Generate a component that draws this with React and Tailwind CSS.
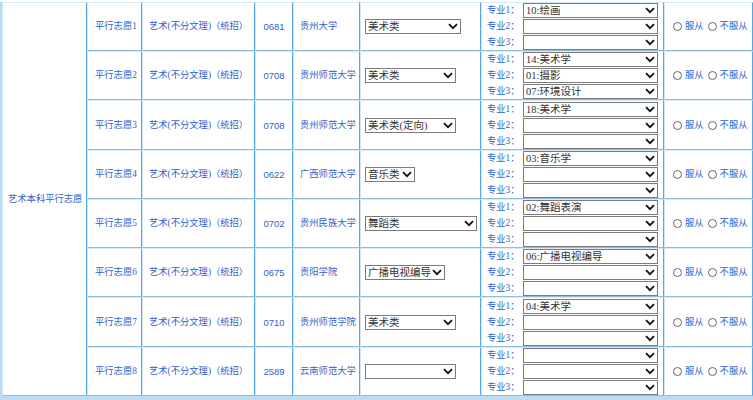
import React from 'react';

const rows = [
  { name: '平行志愿1', code: '0681', school: '贵州大学', cat: '美术类', catW: 'w-[96px]', majors: ['10:绘画', '', ''], h: 'h-[49px]' },
  { name: '平行志愿2', code: '0708', school: '贵州师范大学', cat: '美术类', catW: 'w-[91px]', majors: ['14:美术学', '01:摄影', '07:环境设计'], h: 'h-[49px]' },
  { name: '平行志愿3', code: '0708', school: '贵州师范大学', cat: '美术类(定向)', catW: 'w-[91px]', majors: ['18:美术学', '', ''], h: 'h-[50px]' },
  { name: '平行志愿4', code: '0622', school: '广西师范大学', cat: '音乐类', catW: 'w-[50px]', majors: ['03:音乐学', '', ''], h: 'h-[49px]' },
  { name: '平行志愿5', code: '0702', school: '贵州民族大学', cat: '舞蹈类', catW: 'w-[112px]', majors: ['02:舞蹈表演', '', ''], h: 'h-[49px]' },
  { name: '平行志愿6', code: '0675', school: '贵阳学院', cat: '广播电视编导', catW: 'w-[80px]', majors: ['06:广播电视编导', '', ''], h: 'h-[49px]' },
  { name: '平行志愿7', code: '0710', school: '贵州师范学院', cat: '美术类', catW: 'w-[91px]', majors: ['04:美术学', '', ''], h: 'h-[50px]' },
  { name: '平行志愿8', code: '2589', school: '云南师范大学', cat: '', catW: 'w-[91px]', majors: ['', '', ''], h: 'h-[49px]' },
];

const cell = 'border-l border-l-[#cfe6f8] border-r border-r-[#55a8e8] border-b border-b-[#8fbde0] border-t border-t-[#d6eaf9] align-middle whitespace-nowrap overflow-hidden';

// select box with its own chevron so it looks like the old IE-style dropdown
const Drop = ({ value, w }) => (
  <span className={`relative inline-block align-middle ${w}`}>
    <select
      defaultValue={value}
      className="block w-full h-[15px] appearance-none rounded-none border border-[#7b7b7b] bg-white pl-[2px] pr-[12px] py-0 text-[10.5px] leading-[13px] text-[#333] font-['Liberation_Serif','Noto_Sans_CJK_SC',serif]"
    >
      <option value={value}>{value}</option>
    </select>
    <svg className="pointer-events-none absolute right-[3px] top-[4px] w-[10px] h-[7px]" viewBox="0 0 10 7">
      <path d="M1 1.2l4 4 4-4" stroke="#111" strokeWidth="1.8" fill="none" />
    </svg>
  </span>
);

const Radio = ({ label }) => (
  <label className="inline-flex items-center gap-[3px]">
    <span className="inline-block w-[9px] h-[9px] rounded-full border border-[#666] bg-white" />
    <span>{label}</span>
  </label>
);

export default function App() {
  return (
    <div className="bg-white w-[753px] h-[400px] overflow-hidden pt-[2px] text-[9.3px] leading-[15px] text-[#2f5fce] font-['Liberation_Serif','Noto_Sans_CJK_SC',serif]">
      <table className="table-fixed w-[753px] border-separate border-spacing-0 border-l-[2px] border-l-[#bcdcf4]">
        <colgroup>
          <col className="w-[85px]" />
          <col className="w-[55px]" />
          <col className="w-[113px]" />
          <col className="w-[38px]" />
          <col className="w-[67px]" />
          <col className="w-[121px]" />
          <col className="w-[183px]" />
          <col className="w-[89px]" />
        </colgroup>
        <tbody>
          {rows.map((r, i) => (
            <tr key={r.name} className={r.h}>
              {i === 0 && (
                <td rowSpan={rows.length} className={`${cell} pl-[5px] text-left`}>
                  艺术本科平行志愿
                </td>
              )}
              <td className={`${cell} pl-[7px]`}>{r.name}</td>
              <td className={`${cell} pl-[6px]`}>艺术(不分文理)（统招）</td>
              <td className={`${cell} text-center font-['Liberation_Sans',sans-serif] text-[9.5px]`}>{r.code}</td>
              <td className={`${cell} pl-[6px]`}>{r.school}</td>
              <td className={`${cell} pl-[4px]`}>
                <Drop value={r.cat} w={r.catW} />
              </td>
              <td className={`${cell} pl-[5px]`}>
                <div className="flex flex-col gap-px">
                  {r.majors.map((m, j) => (
                    <div key={j} className="flex items-center h-[15px]">
                      <span className="w-[36px]">专业{j + 1}：</span>
                      <Drop value={m} w="w-[135px]" />
                    </div>
                  ))}
                </div>
              </td>
              <td className={`${cell} pl-[8px]`}>
                <div className="flex items-center gap-[4px]">
                  <Radio label="服从" />
                  <Radio label="不服从" />
                </div>
              </td>
            </tr>
          ))}
        </tbody>
      </table>
      <div className="h-[6px] bg-[#bcdcf4]" />
    </div>
  );
}
